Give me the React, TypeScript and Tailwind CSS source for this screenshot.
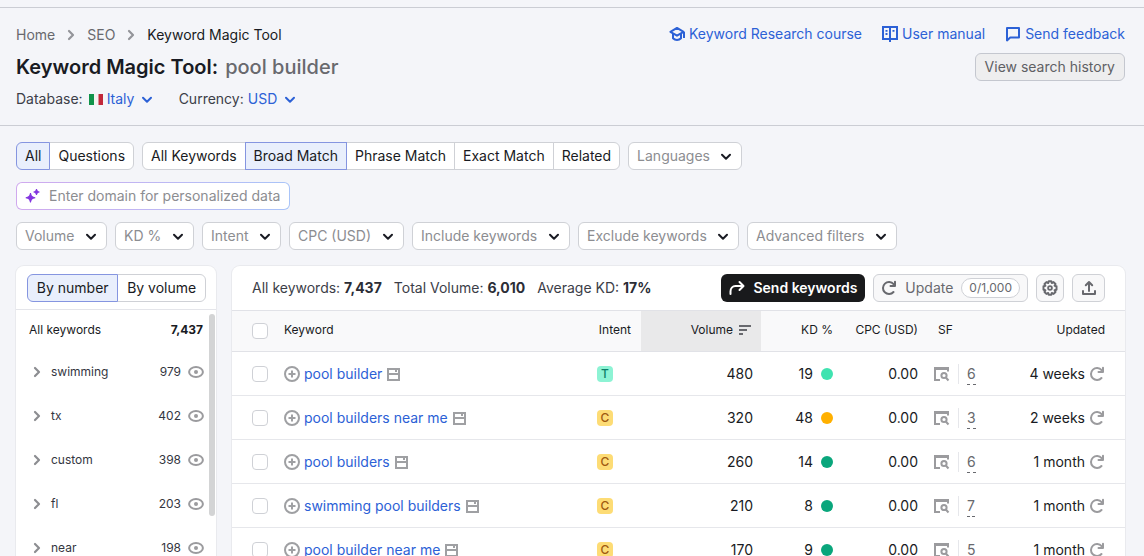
import { useState } from "react";
import type { ReactNode } from "react";

type IconProps = { className?: string };

const ChevronDown = ({ className = "" }: IconProps) => (
  <svg viewBox="0 0 16 16" className={`h-4 w-4 ${className}`} fill="none">
    <path
      d="M4 6.7 8 10.7l4-4"
      stroke="currentColor"
      strokeWidth="2"
      strokeLinecap="round"
      strokeLinejoin="round"
    />
  </svg>
);

const ChevronRight = ({ className = "" }: IconProps) => (
  <svg viewBox="0 0 16 16" className={`h-4 w-4 ${className}`} fill="none">
    <path
      d="M6 4l4 4-4 4"
      stroke="currentColor"
      strokeWidth="2.2"
      strokeLinecap="round"
      strokeLinejoin="round"
    />
  </svg>
);

const CourseIcon = () => (
  <svg viewBox="0 0 16 16" className="h-4 w-4" fill="none">
    <path
      d="M8 1.900 1.400 5.800 8 9.700l6.600-3.900z"
      stroke="currentColor"
      strokeWidth="2"
      strokeLinejoin="round"
    />
    <path
      d="M4 8v4.200c2.200 2.300 5.800 2.300 8 0V8M15 6v6"
      stroke="currentColor"
      strokeWidth="2"
    />
  </svg>
);

const ManualIcon = () => (
  <svg viewBox="0 0 16 16" className="h-4 w-4" fill="none">
    <path d="M1 1h14v12H1zM8 1v15" stroke="currentColor" strokeWidth="2" />
    <path d="M3.500 4.800h2M3.500 8h2M10.500 4.800h2" stroke="currentColor" strokeWidth="1.800" />
  </svg>
);

const FeedbackIcon = () => (
  <svg viewBox="0 0 16 16" className="h-4 w-4" fill="none">
    <path
      d="M2 2h12v9.500H5.200L2 14.400z"
      stroke="currentColor"
      strokeWidth="2"
      strokeLinejoin="round"
    />
  </svg>
);

const SparkleIcon = () => (
  <svg viewBox="0 0 16 16" className="h-4 w-4" fill="currentColor">
    <path d="M6 5c.6 2.900 1.300 3.600 4.300 4.200v1.100C7.300 10.900 6.600 11.600 6 14.500H5c-.6-2.900-1.300-3.600-4.300-4.200V9.200C3.700 8.600 4.400 7.900 5 5z" />
    <path d="M12 1c.3 1.700.9 2.200 2.500 2.500v1c-1.600.3-2.200.8-2.500 2.500h-1c-.3-1.700-.9-2.200-2.500-2.500v-1c1.600-.3 2.200-.8 2.500-2.500z" />
  </svg>
);

const SendIcon = () => (
  <svg viewBox="0 0 16 16" className="h-4 w-4" fill="none">
    <path
      d="M1.500 14v-2.500c0-3.200 2-5.500 5-5.500H14M10.500 2l4 4-4 4"
      stroke="currentColor"
      strokeWidth="2"
      strokeLinecap="round"
      strokeLinejoin="round"
    />
  </svg>
);

const ReloadIcon = ({ className = "" }: IconProps) => (
  <svg viewBox="0 0 16 16" className={`h-4 w-4 ${className}`} fill="none">
    <path
      d="M12.500 12A6 6 0 1 1 12.600 4.200"
      stroke="currentColor"
      strokeWidth="2"
      strokeLinecap="round"
    />
    <path
      d="M14 1.800V6H9.500"
      stroke="currentColor"
      strokeWidth="2"
      strokeLinecap="round"
      strokeLinejoin="round"
    />
  </svg>
);

const GearIcon = () => (
  <svg viewBox="0 0 16 16" className="h-4 w-4" fill="none" stroke="currentColor">
    <path
      d="M6.700 1.200h2.600l.5 1.800 1.800-.9 1.900 1.900-.9 1.700 1.900.6v3.400l-1.900.6.9 1.700-1.900 1.900-1.800-.9-.5 1.800H6.700L6.200 13l-1.800.9L2.500 12l.9-1.700-1.900-.6V6.300l1.900-.6L2.500 4l1.900-1.900L6.200 3z"
      strokeWidth="2"
      strokeLinejoin="round"
    />
    <circle cx="8" cy="8" r="1.900" strokeWidth="1.800" />
  </svg>
);

const ExportIcon = () => (
  <svg viewBox="0 0 16 16" className="h-4 w-4" fill="none">
    <path
      d="M8 11V2.500M4.800 5.200 8 2l3.200 3.200M2 11v3h12v-3"
      stroke="currentColor"
      strokeWidth="2"
      strokeLinecap="round"
      strokeLinejoin="round"
    />
  </svg>
);

const SortIcon = () => (
  <svg viewBox="0 0 12 12" className="h-3 w-3" fill="none">
    <path d="M0 2h12M0 6h8M0 10h4" stroke="currentColor" strokeWidth="1.800" />
  </svg>
);

const EyeIcon = () => (
  <svg viewBox="0 0 16 16" className="h-4 w-4" fill="none">
    <ellipse cx="8" cy="8" rx="6.900" ry="5" stroke="currentColor" strokeWidth="2" />
    <circle cx="8" cy="8" r="2" fill="currentColor" />
  </svg>
);

const PlusIcon = () => (
  <svg viewBox="0 0 16 16" className="h-4 w-4" fill="none" stroke="currentColor">
    <circle cx="8" cy="8" r="7" strokeWidth="2" />
    <path d="M8 4.500v7M4.500 8h7" strokeWidth="2" />
  </svg>
);

const SerpIcon = () => (
  <svg viewBox="0 0 16 16" className="h-4 w-4" fill="none" stroke="currentColor">
    <path d="M2 3h11v11H2z" strokeWidth="2" />
    <path d="M2 8h11M9 5h2" strokeWidth="2" />
  </svg>
);

const SfIcon = () => (
  <svg viewBox="0 0 16 16" className="h-4 w-4" fill="none" stroke="currentColor">
    <path d="M14 5.500V2H1v12h5" strokeWidth="2" />
    <path d="M0 2.500h15" strokeWidth="3" />
    <circle cx="10" cy="9.500" r="2.600" strokeWidth="2" />
    <path d="M11.800 11.500l2.700 3" strokeWidth="2" />
  </svg>
);

const FlagItaly = () => (
  <svg viewBox="0 0 14 11" className="h-[11px] w-3.5">
    <path d="M0 0h5v11H0z" fill="#10934a" />
    <path d="M5 0h4.500v11H5z" fill="#f3f3f0" />
    <path d="M9.500 0H14v11H9.500z" fill="#c2283a" />
  </svg>
);

const FilterSelect = ({ label }: { label: string }) => (
  <div className="relative text-[#8c8d91]">
    <select
      aria-label={label}
      className="h-7 appearance-none rounded-md border border-[#cfd1d6] bg-white pr-[31px] pl-2 text-sm"
    >
      <option>{label}</option>
    </select>
    <ChevronDown className="pointer-events-none absolute top-1.5 right-2 text-[#191b23]" />
  </div>
);

const LinkSelect = ({ label, value }: { label: string; value: string }) => (
  <div className="relative text-[#2c61d6]">
    <select aria-label={label} className="h-5 appearance-none bg-transparent pr-5 text-sm">
      <option>{value}</option>
    </select>
    <ChevronDown className="pointer-events-none absolute top-0.5 right-0" />
  </div>
);

type SegmentedProps = {
  label: string;
  items: string[];
  initial?: string;
};

const Segmented = ({ label, items, initial }: SegmentedProps) => {
  const [active, setActive] = useState(initial);

  return (
    <div role="group" aria-label={label} className="flex">
      {items.map((item) => (
        <button
          key={item}
          type="button"
          aria-pressed={item === active}
          onClick={() => setActive(item)}
          className={`-ml-px h-7 grow border px-2 text-sm whitespace-nowrap text-[#191b23] first:ml-0 first:rounded-l-md last:rounded-r-md ${
            item === active
              ? "z-10 border-[#8595e0] bg-[#e9effc]"
              : "border-[#cfd1d6] bg-white"
          }`}
        >
          {item}
        </button>
      ))}
    </div>
  );
};

const HeaderLink = ({ icon, children }: { icon: ReactNode; children: string }) => (
  <a href="#" className="flex items-center gap-1">
    {icon}
    {children}
  </a>
);

const Checkbox = ({ label }: { label: string }) => (
  <input
    type="checkbox"
    aria-label={label}
    className="block h-4 w-4 appearance-none rounded border border-[#cfd1d6] bg-white checked:bg-[#2c61d6]"
  />
);

const filters = [
  "Volume",
  "KD %",
  "Intent",
  "CPC (USD)",
  "Include keywords",
  "Exclude keywords",
  "Advanced filters",
];

const groups = [
  { name: "swimming", count: 979 },
  { name: "tx", count: 402 },
  { name: "custom", count: 398 },
  { name: "fl", count: 203 },
  { name: "near", count: 198 },
];

const stats = [
  { label: "All keywords:", value: "7,437" },
  { label: "Total Volume:", value: "6,010" },
  { label: "Average KD:", value: "17%" },
];

const rows = [
  { keyword: "pool builder", intent: "T", volume: 480, kd: 19, dot: "bg-[#3fe3b0]", sf: 6, updated: "4 weeks" },
  { keyword: "pool builders near me", intent: "C", volume: 320, kd: 48, dot: "bg-[#ffb000]", sf: 3, updated: "2 weeks" },
  { keyword: "pool builders", intent: "C", volume: 260, kd: 14, dot: "bg-[#0aa67c]", sf: 6, updated: "1 month" },
  { keyword: "swimming pool builders", intent: "C", volume: 210, kd: 8, dot: "bg-[#0aa67c]", sf: 7, updated: "1 month" },
  { keyword: "pool builder near me", intent: "C", volume: 170, kd: 9, dot: "bg-[#0aa67c]", sf: 5, updated: "1 month" },
];

const PageHeader = () => (
  <header className="flex h-[118px] items-start justify-between border-b border-[#cbcdd4] pt-[17px] pr-[19px] pl-4">
    <div>
      <nav aria-label="Breadcrumb" className="flex h-5 items-center gap-2 text-sm text-[#68696e]">
        <a href="#">Home</a>
        <ChevronRight className="text-[#939499]" />
        <a href="#">SEO</a>
        <ChevronRight className="text-[#939499]" />
        <span className="text-[#191b23]">Keyword Magic Tool</span>
      </nav>
      <h1 className="mt-2 flex h-7 items-center gap-[7px] text-xl font-semibold text-[#191b23]">
        Keyword Magic Tool:
        <span className="font-medium text-[#68696e]">pool builder</span>
      </h1>
      <div className="mt-2 flex h-5 items-center text-sm text-[#3c3e48]">
        <span>Database:</span>
        <span className="mr-1 ml-1.5">
          <FlagItaly />
        </span>
        <LinkSelect label="Database" value="Italy" />
        <span className="mr-1 ml-6">Currency:</span>
        <LinkSelect label="Currency" value="USD" />
      </div>
    </div>
    <div className="flex flex-col items-end gap-2.5">
      <div className="flex h-[18px] items-center gap-5 text-sm text-[#2c61d6]">
        <HeaderLink icon={<CourseIcon />}>Keyword Research course</HeaderLink>
        <HeaderLink icon={<ManualIcon />}>User manual</HeaderLink>
        <HeaderLink icon={<FeedbackIcon />}>Send feedback</HeaderLink>
      </div>
      <button
        type="button"
        className="h-7 rounded-md border border-[#c4c7cf] bg-[#eeeeef] px-[9px] text-sm text-[#5f6064]"
      >
        View search history
      </button>
    </div>
  </header>
);

const GroupsPanel = () => (
  <aside className="w-[200px] shrink-0 rounded-t-lg bg-white shadow-xs ring-1 ring-[#e9eaee]">
    <div className="grid h-11 items-center border-b border-[#e4e5ea] pr-2.5 pl-[11px]">
      <Segmented label="Group order" items={["By number", "By volume"]} initial="By number" />
    </div>
    <div className="flex">
      <ul className="grow pl-[13px] text-xs text-[#191b23]">
        <li className="flex h-10 items-center justify-between pr-1.5">
          <span>All keywords</span>
          <b className="font-bold">7,437</b>
        </li>
        {groups.map((group) => (
          <li key={group.name} className="flex h-11 items-center pr-[5px] text-[#34363f]">
            <button type="button" className="flex grow items-center gap-1.5 text-left">
              <ChevronRight className="text-[#8c8d91]" />
              {group.name}
            </button>
            <span className="mr-[7px]">{group.count}</span>
            <button type="button" aria-label={`Hide ${group.name}`} className="text-[#9b9b9e]">
              <EyeIcon />
            </button>
          </li>
        ))}
      </ul>
      <div className="mt-1 mr-px h-[202px] w-1.5 rounded-full bg-[#d3d4d5]" />
    </div>
  </aside>
);

const KeywordToolbar = () => (
  <div className="flex h-11 items-center justify-between px-5">
    <div className="flex gap-3 text-sm text-[#3c3e48]">
      {stats.map((stat) => (
        <span key={stat.label}>
          {stat.label} <b className="font-bold text-[#2b2d36]">{stat.value}</b>
        </span>
      ))}
    </div>
    <div className="flex gap-2 text-sm text-[#68696e]">
      <button
        type="button"
        className="flex h-7 items-center gap-2 rounded-md bg-[#191a1c] px-2 font-semibold text-white"
      >
        <SendIcon />
        Send keywords
      </button>
      <button
        type="button"
        className="flex h-7 items-center gap-2 rounded-md border border-[#cfd1d6] bg-[#f8f8f9] px-[7px]"
      >
        <ReloadIcon />
        Update
        <span className="rounded-full border border-[#cfd1d6] bg-white px-[7px] text-xs leading-[18px]">
          0/1,000
        </span>
      </button>
      <button
        type="button"
        aria-label="Settings"
        className="grid h-7 w-7 place-items-center rounded-md border border-[#cfd1d6] bg-[#f8f8f9]"
      >
        <GearIcon />
      </button>
      <button
        type="button"
        aria-label="Export"
        className="grid h-7 w-[33px] place-items-center rounded-md border border-[#cfd1d6] bg-[#f8f8f9]"
      >
        <ExportIcon />
      </button>
    </div>
  </div>
);

const KeywordTable = () => (
  <table className="w-full table-fixed text-sm text-[#191b23]">
    <colgroup>
      <col className="w-[52px]" />
      <col />
      <col className="w-[52px]" />
      <col className="w-[120px]" />
      <col className="w-20" />
      <col className="w-[85px]" />
      <col className="w-16" />
      <col className="w-[135px]" />
    </colgroup>
    <thead>
      <tr className="h-[41px] border-y border-[#e1e2e7] bg-[#f9f9fa] text-xs [&>th]:font-normal">
        <th className="pl-5">
          <Checkbox label="Select all keywords" />
        </th>
        <th className="pb-0.5 text-left">Keyword</th>
        <th className="pr-2.5 pb-0.5 text-right">Intent</th>
        <th className="bg-[#e9e9ea] pr-2.5 pb-0.5">
          <button type="button" className="ml-auto flex items-center gap-1.5">
            Volume
            <span className="text-[#68696e]">
              <SortIcon />
            </span>
          </button>
        </th>
        <th className="pr-2 pb-0.5 text-right">KD %</th>
        <th className="pr-2 pb-0.5 text-right">CPC (USD)</th>
        <th className="pb-0.5 pl-3 text-left">SF</th>
        <th className="pr-5 pb-0.5 text-right">Updated</th>
      </tr>
    </thead>
    <tbody>
      {rows.map((row) => (
        <tr key={row.keyword} className="h-11 border-b border-[#e6e7eb]">
          <td className="pl-5">
            <Checkbox label={`Select ${row.keyword}`} />
          </td>
          <td>
            <div className="flex items-center text-[#9fa0a3]">
              <button type="button" aria-label={`Add ${row.keyword}`}>
                <PlusIcon />
              </button>
              <a href="#" className="mx-1 text-[#2c61d6]">
                {row.keyword}
              </a>
              <SerpIcon />
            </div>
          </td>
          <td className="pl-2">
            <span
              className={`block h-4 w-4 rounded-sm text-center text-xs leading-4 font-medium ${
                row.intent === "T" ? "bg-[#8df3d4] text-[#0b7f69]" : "bg-[#fddc75] text-[#a05a10]"
              }`}
            >
              {row.intent}
            </span>
          </td>
          <td className="pr-2 text-right">{row.volume}</td>
          <td className="pr-2">
            <div className="flex items-center justify-end gap-2">
              {row.kd}
              <span className={`h-3 w-3 rounded-full ${row.dot}`} />
            </div>
          </td>
          <td className="pr-2 text-right">0.00</td>
          <td className="pl-2">
            <div className="flex items-center gap-2 text-[#9b9b9e]">
              <SfIcon />
              <a href="#" className="border-l border-[#e6e7eb] pl-2">
                <span className="border-b border-dashed border-[#68696e] pb-0.5 text-[#68696e]">
                  {row.sf}
                </span>
              </a>
            </div>
          </td>
          <td className="pr-5">
            <div className="flex items-center justify-end gap-1">
              {row.updated}
              <button
                type="button"
                aria-label={`Refresh ${row.keyword}`}
                className="text-[#9b9b9e]"
              >
                <ReloadIcon />
              </button>
            </div>
          </td>
        </tr>
      ))}
    </tbody>
  </table>
);

const App = () => {
  return (
    <div className="min-h-screen bg-[#f4f5f9] font-['Inter',sans-serif]">
      <div className="h-2 border-b border-[#cbcdd4]" />
      <PageHeader />
      <main className="pt-4 pr-[19px] pl-4">
        <div className="flex gap-2">
          <Segmented label="Question filter" items={["All", "Questions"]} initial="All" />
          <Segmented
            label="Match type"
            items={["All Keywords", "Broad Match", "Phrase Match", "Exact Match", "Related"]}
            initial="Broad Match"
          />
          <FilterSelect label="Languages" />
        </div>
        <div className="mt-3 flex h-7 w-[274px] rounded-md bg-linear-to-r from-[#d0a9ee] to-[#a9c4f8] p-px">
          <label className="flex grow items-center gap-2 rounded-[5px] bg-white pl-2 text-[#8437e0]">
            <SparkleIcon />
            <input
              type="text"
              aria-label="Domain"
              placeholder="Enter domain for personalized data"
              className="min-w-0 grow bg-transparent text-sm text-[#191b23] outline-none placeholder:text-[#8c8d91]"
            />
          </label>
        </div>
        <div className="mt-3 flex gap-2">
          {filters.map((filter) => (
            <FilterSelect key={filter} label={filter} />
          ))}
        </div>
        <div className="mt-4 flex items-start gap-4">
          <GroupsPanel />
          <section className="min-w-0 grow rounded-t-lg bg-white shadow-xs ring-1 ring-[#e9eaee]">
            <KeywordToolbar />
            <KeywordTable />
          </section>
        </div>
      </main>
    </div>
  );
};

export default App;
